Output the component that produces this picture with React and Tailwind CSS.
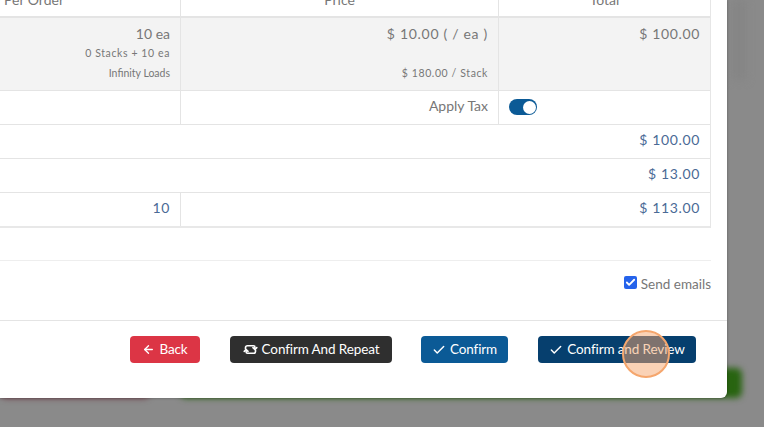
import React from 'react';
import { ArrowLeft, Check } from 'lucide-react';

const font = { fontFamily: 'Lato, sans-serif' };

function Btn({ className, icon, label }) {
  return (
    <button className={`flex h-[27px] items-center justify-center gap-1 rounded-[4px] text-[13.5px] tracking-[-0.12px] text-white ${className}`}>
      {icon}
      {label}
    </button>
  );
}

// repeat icon: short vertical arrow heads on both ends
function RepeatIcon() {
  return (
    <svg className="h-[15px] w-[15px]" viewBox="0 0 24 24" fill="none" stroke="currentColor" strokeWidth="2.6" strokeLinecap="round" strokeLinejoin="round">
      <path d="M4 11V9a3 3 0 0 1 3-3h10a2 2 0 0 1 2 2v3" />
      <path d="m16 9 3 3 3-3" />
      <path d="M20 13v2a3 3 0 0 1-3 3H7a2 2 0 0 1-2-2v-3" />
      <path d="m8 15-3-3-3 3" />
    </svg>
  );
}

export default function App() {
  return (
    <div className="relative h-[427px] w-[764px] overflow-hidden bg-[#8a8a8a]" style={font}>
      {/* blurred page behind the modal */}
      <div className="absolute left-[732px] top-0 h-[80px] w-[14px] bg-[#858585] blur-[4px]" />
      <div className="absolute left-[180px] top-[368px] h-[30px] w-[562px] rounded-md bg-[#286410] blur-[3px]" />
      <div className="absolute left-0 top-[380px] h-[18px] w-[150px] rounded-md bg-[#6e3844] blur-[3px]" />

      <div className="relative flex h-[398px] w-[727px] flex-col rounded-br-[6px] bg-white shadow-[0_0_3px_rgba(0,0,0,0.35)]">
        {/* order table */}
        <div className="w-[711px] border-r border-[#e6e6e6] text-[#777777]">
          <div className="grid h-[18px] grid-cols-[181px_318px_1fr] border-b-2 border-[#e4e4e4] text-[14px] leading-[0px]">
            <div className="flex justify-end whitespace-nowrap border-r border-[#e4e4e4] pr-[116px]">y Per Order</div>
            <div className="border-r border-[#e4e4e4] text-center">Price</div>
            <div className="text-center">Total</div>
          </div>

          <div className="grid h-[73px] grid-cols-[181px_318px_1fr] border-b border-[#e4e4e4] bg-[#f3f3f3]">
            <div className="border-r border-[#e4e4e4] pr-[10px] pt-[6px] text-right">
              <div className="text-[14px] leading-[20px]">10 ea</div>
              <div className="text-[10.5px] leading-[19px] tracking-[0.6px]">0 Stacks + 10 ea</div>
              <div className="text-[10.5px] leading-[21px]">Infinity Loads</div>
            </div>
            <div className="border-r border-[#e4e4e4] pr-[10px] pt-[6px] text-right">
              <div className="text-[14px] leading-[20px] tracking-[0.7px]">$ 10.00 ( / ea )</div>
              <div className="mt-[19px] text-[10.5px] leading-[21px] tracking-[0.6px]">$ 180.00 / Stack</div>
            </div>
            <div className="pr-[10px] pt-[6px] text-right text-[14px] leading-[20px] tracking-[0.65px]">$ 100.00</div>
          </div>

          <div className="grid h-[34px] grid-cols-[181px_318px_1fr] border-b border-[#e4e4e4]">
            <div className="border-r border-[#e4e4e4]" />
            <div className="flex items-center justify-end border-r border-[#e4e4e4] pb-[4px] pr-[10px] text-[14px]">Apply Tax</div>
            <div className="flex items-center pb-[1px] pl-[10px]">
              <div className="flex h-[16px] w-[28px] items-center justify-end rounded-full bg-[#0b5a96] pr-[1px]">
                <div className="h-[13px] w-[13px] rounded-full bg-white" />
              </div>
            </div>
          </div>

          <div className="flex h-[34px] items-center justify-end border-b border-[#e4e4e4] pb-[4px] pr-[10px] text-[14px] tracking-[0.65px] text-[#4a6a96]">$ 100.00</div>
          <div className="flex h-[34px] items-center justify-end border-b border-[#e4e4e4] pb-[4px] pr-[10px] text-[14px] tracking-[0.65px] text-[#4a6a96]">$ 13.00</div>

          <div className="grid h-[35px] grid-cols-[181px_1fr] border-b-2 border-[#e8e8e8] text-[14px] tracking-[0.65px] text-[#4a6a96]">
            <div className="flex items-center justify-end border-r border-[#e4e4e4] pb-[4px] pr-[10px]">10</div>
            <div className="flex items-center justify-end pb-[4px] pr-[10px]">$ 113.00</div>
          </div>
        </div>

        {/* send emails */}
        <div className="mt-[32px] flex h-[60px] w-[711px] items-start justify-end gap-[4px] border-t border-[#eeeeee] pt-[15px] text-[13.5px] leading-[16px] text-[#777777]">
          <span className="flex h-[13px] w-[13px] items-center justify-center rounded-[2px] bg-[#2563eb]">
            <Check className="h-[11px] w-[11px] text-white" strokeWidth={4} />
          </span>
          Send emails
        </div>

        {/* footer buttons */}
        <div className="flex flex-1 items-start border-t border-[#e4e4e4] pl-[130px] pt-[15px]">
          <Btn className="w-[70px] bg-[#dc3545]" icon={<ArrowLeft className="h-[13px] w-[13px]" strokeWidth={2.5} />} label="Back" />
          <Btn className="ml-[30px] w-[162px] bg-[#2f2f2f]" icon={<RepeatIcon />} label="Confirm And Repeat" />
          <Btn className="ml-[29px] w-[87px] bg-[#0b5a96]" icon={<Check className="h-[14px] w-[14px]" strokeWidth={2.5} />} label="Confirm" />
          <Btn className="ml-[30px] w-[158px] bg-[#063f6e]" icon={<Check className="h-[14px] w-[14px]" strokeWidth={2.5} />} label="Confirm and Review" />
        </div>
      </div>

      {/* click marker */}
      <div className="absolute left-[622px] top-[330px] h-[48px] w-[48px] rounded-full border-2 border-[#f5a66d] bg-[#f5a66d]/50" />
    </div>
  );
}
